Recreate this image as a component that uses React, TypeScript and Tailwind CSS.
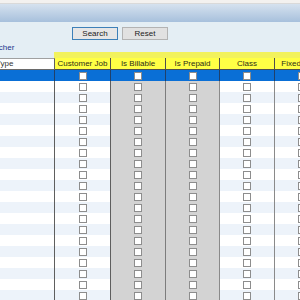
const columns = [
  { label: "Customer Job", grey: false, border: "border-[#5e5e5e]" },
  { label: "Is Billable", grey: true, border: "border-[#7c7c7c]" },
  { label: "Is Prepaid", grey: true, border: "border-[#8a8a8a]" },
  { label: "Class", grey: false, border: "border-[#8a8a8a]" },
  { label: "Fixed Asset", grey: false, border: "border-[#5e5e5e]" },
];

const rowCount = 21;

const Box = () => <span className="block w-2 h-2 border border-[#8d8d8d] bg-white" />;

const App = () => {
  return (
    <div className="w-[300px] h-[300px] overflow-hidden bg-[#e4eef4] font-['Liberation_Sans_Narrow','Liberation_Sans',sans-serif] text-[8px] text-[#333]">
      <div className="h-[4px] bg-[#f3f1ef] border-b border-[#d9d9d9]" />
      <div className="h-[18px] bg-gradient-to-b from-[#d6e2ef] to-[#a7c0dc]" />

      <div className="pt-[5px] flex gap-[4px] pl-[72px]">
        <button className="w-[46px] h-[13px] border border-[#3d80b8] bg-[#e6e6e6] text-[8px] leading-none text-[#222]">
          Search
        </button>
        <button className="w-[46px] h-[13px] border border-[#b3b3b3] bg-[#e1e1e1] text-[8px] leading-none text-[#222]">
          Reset
        </button>
      </div>
      <div className="mt-[3px] h-[9px] leading-[9px] -ml-[15px] text-[#22348c]">Voucher</div>

      <div className="flex h-[6px]">
        <div className="w-[54px]" />
        <div className="flex-1 bg-[#f2f25c]" />
      </div>

      <div className="w-[330px] grid grid-cols-[55px_56px_55px_54px_55px_55px]">
        {/* header */}
        <div className="h-[12px] bg-white border-t border-b border-r border-t-[#a0a0a0] border-b-[#6a6a6a] border-r-[#5e5e5e] leading-[10px]">
          <span className="-ml-[4px] block">Type</span>
        </div>
        {columns.map((c) => (
          <div
            key={c.label}
            className="h-[12px] bg-[#ffff45] border-b border-r border-[#4e4e4e] text-center leading-[11px] text-[#2e2e14]"
          >
            {c.label}
          </div>
        ))}

        {/* selected row */}
        <div className="h-[11px] bg-[#0a6fd6] border-r border-[#20406a]" />
        {columns.map((c) => (
          <div key={c.label} className="h-[11px] bg-[#0a6fd6] border-r border-[#20406a] flex items-center justify-center">
            <Box />
          </div>
        ))}

        {Array.from({ length: rowCount }).map((_, i) => {
          const stripe = i % 2 === 0 ? "bg-white" : "bg-[#edf3fa]";
          return [
            <div key={`t${i}`} className={`h-[11px] ${stripe} border-r border-[#5e5e5e]`} />,
            ...columns.map((c) => (
              <div
                key={`${c.label}${i}`}
                className={`h-[11px] ${c.grey ? "bg-[#d3d3d3]" : stripe} border-r ${c.border} flex items-center justify-center`}
              >
                <Box />
              </div>
            )),
          ];
        })}
      </div>
    </div>
  );
};

export default App;
